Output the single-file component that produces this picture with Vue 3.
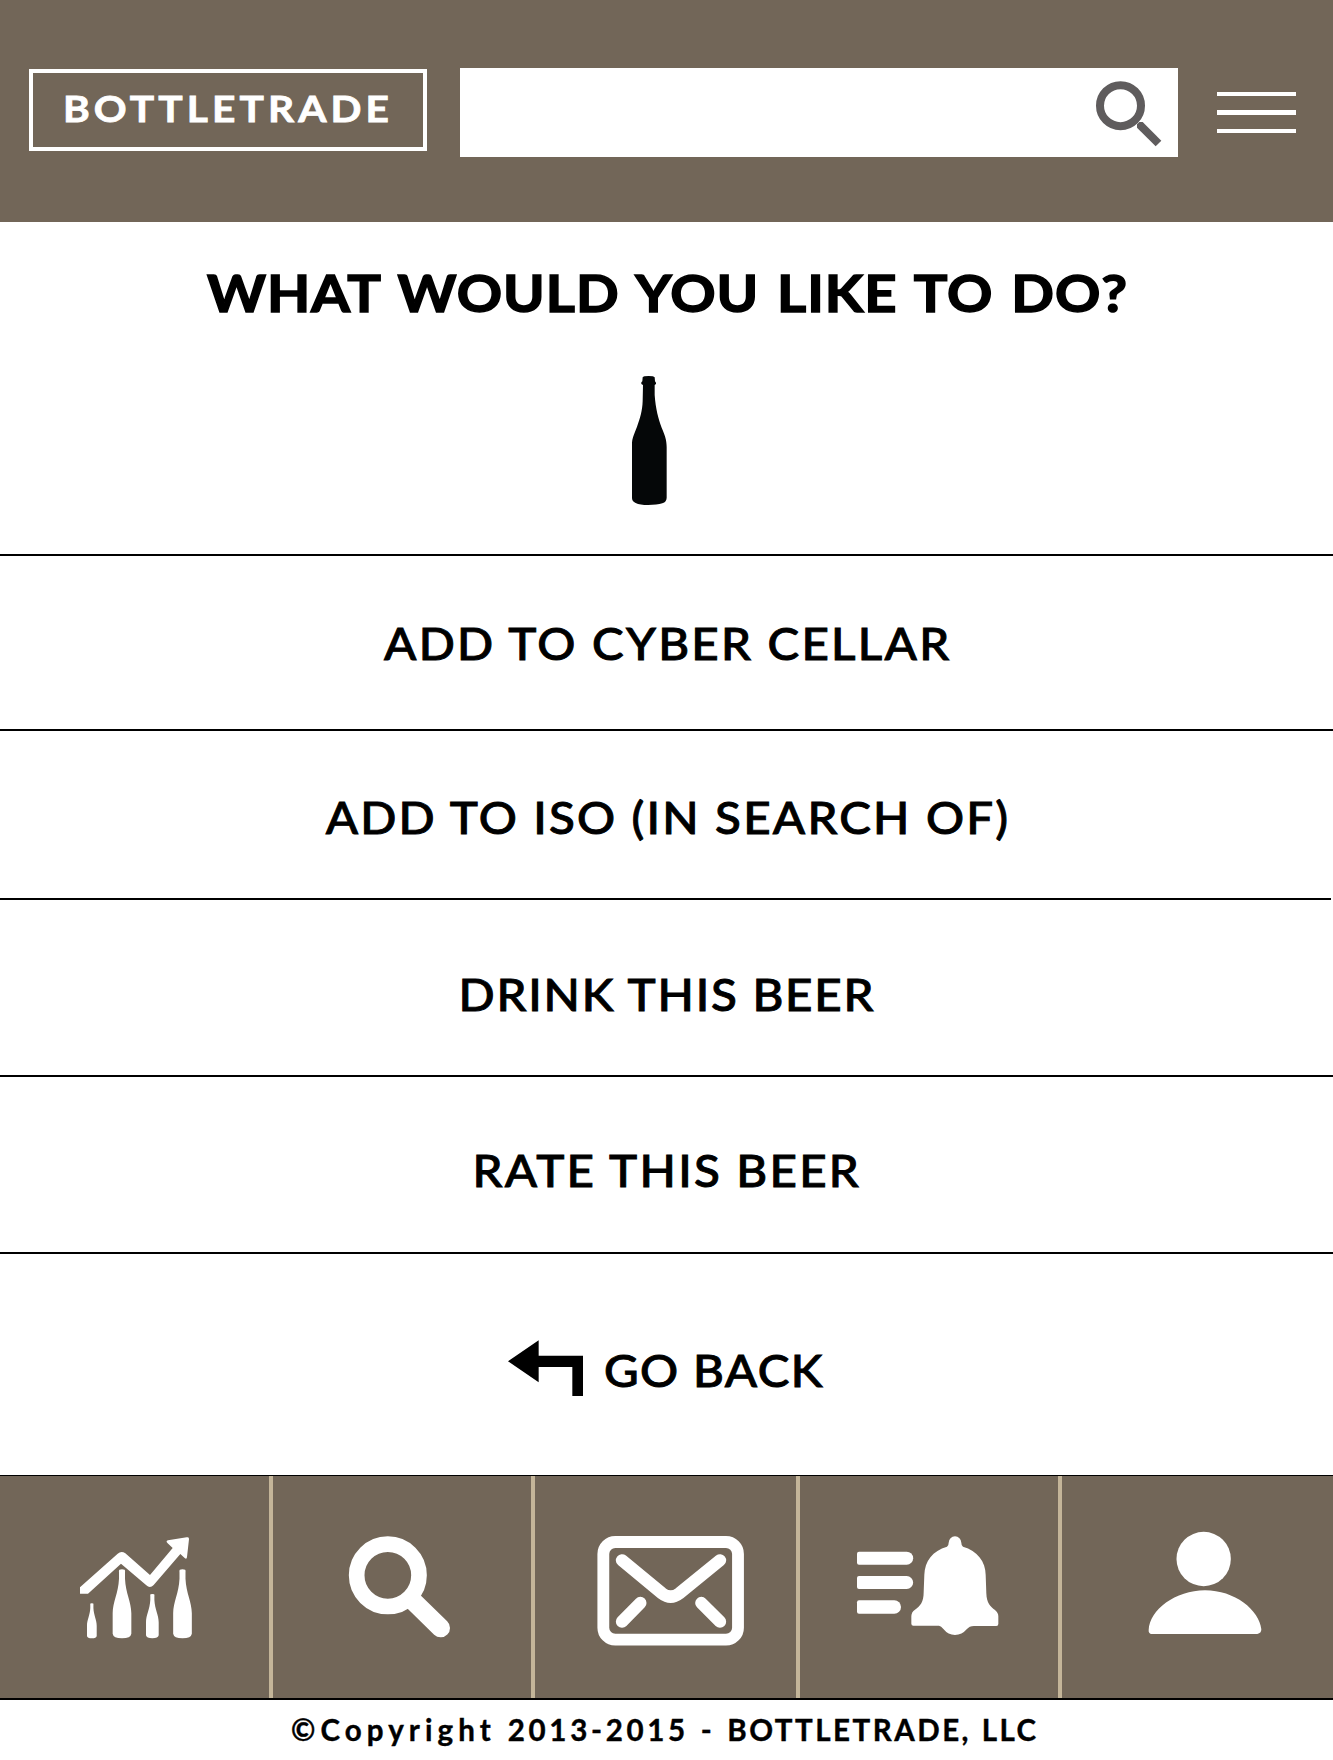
<script setup>
const actions = [
  { id: 'cellar', label: 'ADD TO CYBER CELLAR' },
  { id: 'iso', label: 'ADD TO ISO (IN SEARCH OF)' },
  { id: 'drink', label: 'DRINK THIS BEER' },
  { id: 'rate', label: 'RATE THIS BEER' },
]

const smallBottle =
  'M20 1Q28 -1 36 1Q38 3 37 10V28C39 72 56 98 56 132V193Q54 207 28 207Q2 207 0 193V132C0 98 17 72 19 28V10Q18 3 20 1Z'
const bottles = [
  'translate(111 400) scale(.52 .507)',
  'translate(188 298)',
  'translate(288 372) scale(.68 .643)',
  'translate(369.500 298)',
]
</script>

<template>
  <div class="app">
    <header class="header">
      <div class="logo"><span>BOTTLETRADE</span></div>
      <div class="search">
        <svg class="search-icon" viewBox="138 92 198 198" width="66" height="66">
          <circle cx="211.500" cy="166" r="61.500" fill="none" stroke="#5f5c5d" stroke-width="24" />
          <path d="M261 232V222L268 215H278L334 271L317 288Z" fill="#5f5c5d" />
        </svg>
      </div>
      <div class="burger"><i></i><i></i><i></i></div>
    </header>

    <section class="intro">
      <h1>WHAT WOULD YOU LIKE TO DO?</h1>
      <svg class="bottle" viewBox="1323 377 111 393" width="37" height="131">
        <path
          fill="#050708"
          d="M1358 384Q1360 380 1376 380Q1391 380 1394 384L1395 396L1398 400V404L1394 407V437C1397 478 1405 509 1415 535C1424 556 1430 570 1430 594V745Q1430 757 1417 762Q1401 767 1374 767Q1350 767 1337 761Q1326 756 1326 746V585C1326 566 1332 556 1341 532C1350 507 1357 485 1358 455L1359 407L1354 404V399L1357 396Z"
        />
      </svg>
    </section>

    <main>
      <div v-for="a in actions" :key="a.id" class="row" :class="a.id">
        <span>{{ a.label }}</span>
      </div>
      <div class="row back">
        <svg viewBox="203 299 226 169" width="75.330" height="56.330">
          <path d="M203 363L295 300V346H429V467H396V380H295V426Z" />
        </svg>
        <span>GO BACK</span>
      </div>
    </main>

    <nav class="nav">
      <a>
        <svg viewBox="0 1476 269 222" width="269" height="222">
          <g fill="#fff" transform="translate(50 1470) scale(.33333)">
            <path
              d="M90 352L203 251Q214 241 226 250L300 315L368 234L353 220Q346 213 354 211L410 202Q418 200 417 208L411 261Q410 270 404 264L391 252L311 345Q300 356 289 346L213 281L114 371H90Z"
            />
            <path v-for="b in bottles" :key="b" :d="smallBottle" :transform="b" />
          </g>
        </svg>
      </a>
      <a>
        <svg viewBox="273 1476 258 222" width="258" height="222">
          <g transform="translate(320 1500) scale(.33333)" fill="none" stroke="#fff">
            <circle cx="203.500" cy="226" r="93.500" stroke-width="47" />
            <path d="M275 299L362 384" stroke-width="56" stroke-linecap="round" />
          </g>
        </svg>
      </a>
      <a>
        <svg viewBox="535 1476 261 222" width="261" height="222">
          <g transform="translate(580 1510) scale(.33333)" fill="none" stroke="#fff" stroke-linecap="round">
            <rect x="70" y="96" width="404" height="293" rx="36" stroke-width="35.500" />
            <path
              d="M126 151L246 250Q272 270 298 250L420 151M126 335L181 279M420 335L364 279"
              stroke-width="37"
            />
          </g>
        </svg>
      </a>
      <a>
        <svg viewBox="800 1476 259 222" width="259" height="222">
          <g transform="translate(830 1510) scale(.33333)" fill="#fff">
            <path d="M87 125H230A19.500 19.500 0 0 1 230 164H87Q81 164 81 158V131Q81 125 87 125Z" />
            <path d="M87 198H230A19.500 19.500 0 0 1 230 237H87Q81 237 81 231V204Q81 198 87 198Z" />
            <path d="M87 271H193A19.500 19.500 0 0 1 193 311H87Q81 311 81 305V277Q81 271 87 271Z" />
            <path
              d="M356 98A19 19 0 0 1 394 98Q394 107 399 110C442 122 467 155 467 194L469 250C470 280 481 290 495 300Q505 308 505 319V342Q505 348 499 348H432Q418 348 410 358Q396 375 375 375Q354 375 341 358Q333 348 327 347H250Q244 347 244 341V319Q244 306 255 299C271 289 281 275 281 247L283 194C284 154 308 122 351 110Q356 107 356 98Z"
            />
          </g>
        </svg>
      </a>
      <a>
        <svg viewBox="1062 1476 271 222" width="271" height="222">
          <g transform="translate(1100 1500) scale(.33333)" fill="#fff">
            <circle cx="311" cy="177" r="81.500" />
            <path
              d="M155 402Q145 401 146 390C149 330 226 271 315 271C404 271 478 330 484 388Q484 400 472 402Z"
            />
          </g>
        </svg>
      </a>
    </nav>

    <footer class="footer">
      <span class="wide">©Copyright</span> 2013-2015 - <span class="tight">BOTTLETRADE, LLC</span>
    </footer>
  </div>
</template>

<style>
body {
  margin: 0;
  background: #fff;
}
</style>

<style scoped>
.app {
  width: 1333px;
  height: 1760px;
  overflow: hidden;
  background: #fff;
  color: #000;
  font-family: Lato, "Liberation Sans", sans-serif;
}
.header {
  display: flex;
  align-items: flex-start;
  box-sizing: border-box;
  height: 222px;
  padding: 68px 37px 0 29px;
  background: #726658;
}
.logo {
  box-sizing: border-box;
  width: 398px;
  height: 82px;
  margin-top: 1px;
  padding: 12.500px 0 0 30px;
  border: 4px solid #fff;
  color: #fff;
  font-size: 37px;
  font-weight: 700;
  line-height: 44px;
  letter-spacing: 3.700px;
  white-space: nowrap;
  -webkit-text-stroke: 0.800px #fff;
}
.logo span {
  display: inline-block;
  transform: scaleX(1.1);
  transform-origin: 0 50%;
}
.search {
  display: flex;
  justify-content: flex-end;
  box-sizing: border-box;
  width: 718px;
  height: 89px;
  margin-left: 33px;
  padding: 12.500px 16px 0 0;
  background: #fff;
}
.burger {
  display: flex;
  flex-direction: column;
  gap: 14.500px;
  width: 79.500px;
  margin: 23.500px 0 0 38.500px;
}
.burger i {
  height: 4.300px;
  background: #fff;
}
.intro {
  display: flex;
  flex-direction: column;
  align-items: center;
  box-sizing: border-box;
  height: 334px;
  padding-top: 40px;
  border-bottom: 2px solid #000;
}
h1 {
  margin: 0 -1px 0 0;
  font-size: 52px;
  font-weight: 700;
  line-height: 60px;
  letter-spacing: 0.900px;
  word-spacing: 3px;
  white-space: nowrap;
  -webkit-text-stroke: 1.500px #000;
  transform: scaleX(1.08);
}
.bottle {
  margin: 53px 34.500px 0 0;
}
.row {
  display: flex;
  align-items: center;
  justify-content: center;
  box-sizing: border-box;
  border-bottom: 2px solid #000;
  font-size: 44px;
  font-weight: 500;
  line-height: 52px;
  white-space: nowrap;
  -webkit-text-stroke: 0.900px #000;
}
.row span {
  margin-right: -2px;
  transform: scaleX(1.08);
}
.cellar {
  height: 175px;
  letter-spacing: 2.100px;
}
.iso {
  width: 1331px;
  height: 169px;
  padding: 4px 0 0 2px;
  letter-spacing: 2.050px;
}
.drink {
  height: 177px;
  padding: 12px 1px 0 0;
  letter-spacing: 1.650px;
}
.rate {
  height: 177px;
  padding: 11px 1px 0 0;
  letter-spacing: 2.100px;
}
.back {
  align-items: flex-start;
  justify-content: flex-start;
  height: 222px;
  padding: 85.700px 0 0 507.500px;
  border-bottom: 1px solid #000;
  letter-spacing: 1.300px;
}
.row.back span {
  margin: 4.500px 0 0 21.500px;
  transform-origin: 0 50%;
}
.nav {
  display: grid;
  grid-template-columns: 273px 262px 265px 262px 271px;
  height: 222px;
  background: #726658;
  border-bottom: 2px solid #000;
}
.nav a {
  border-right: 4px solid #c4b599;
}
.nav a:last-child {
  border-right: 0;
}
.nav svg {
  display: block;
}
.footer {
  padding: 11.500px 0 0 291px;
  font-size: 29.500px;
  font-weight: 700;
  line-height: 36px;
  letter-spacing: 3.700px;
  word-spacing: 1px;
  white-space: nowrap;
  -webkit-text-stroke: 0.400px #000;
}
.wide {
  letter-spacing: 5.100px;
}
.tight {
  letter-spacing: 2.500px;
}
</style>
